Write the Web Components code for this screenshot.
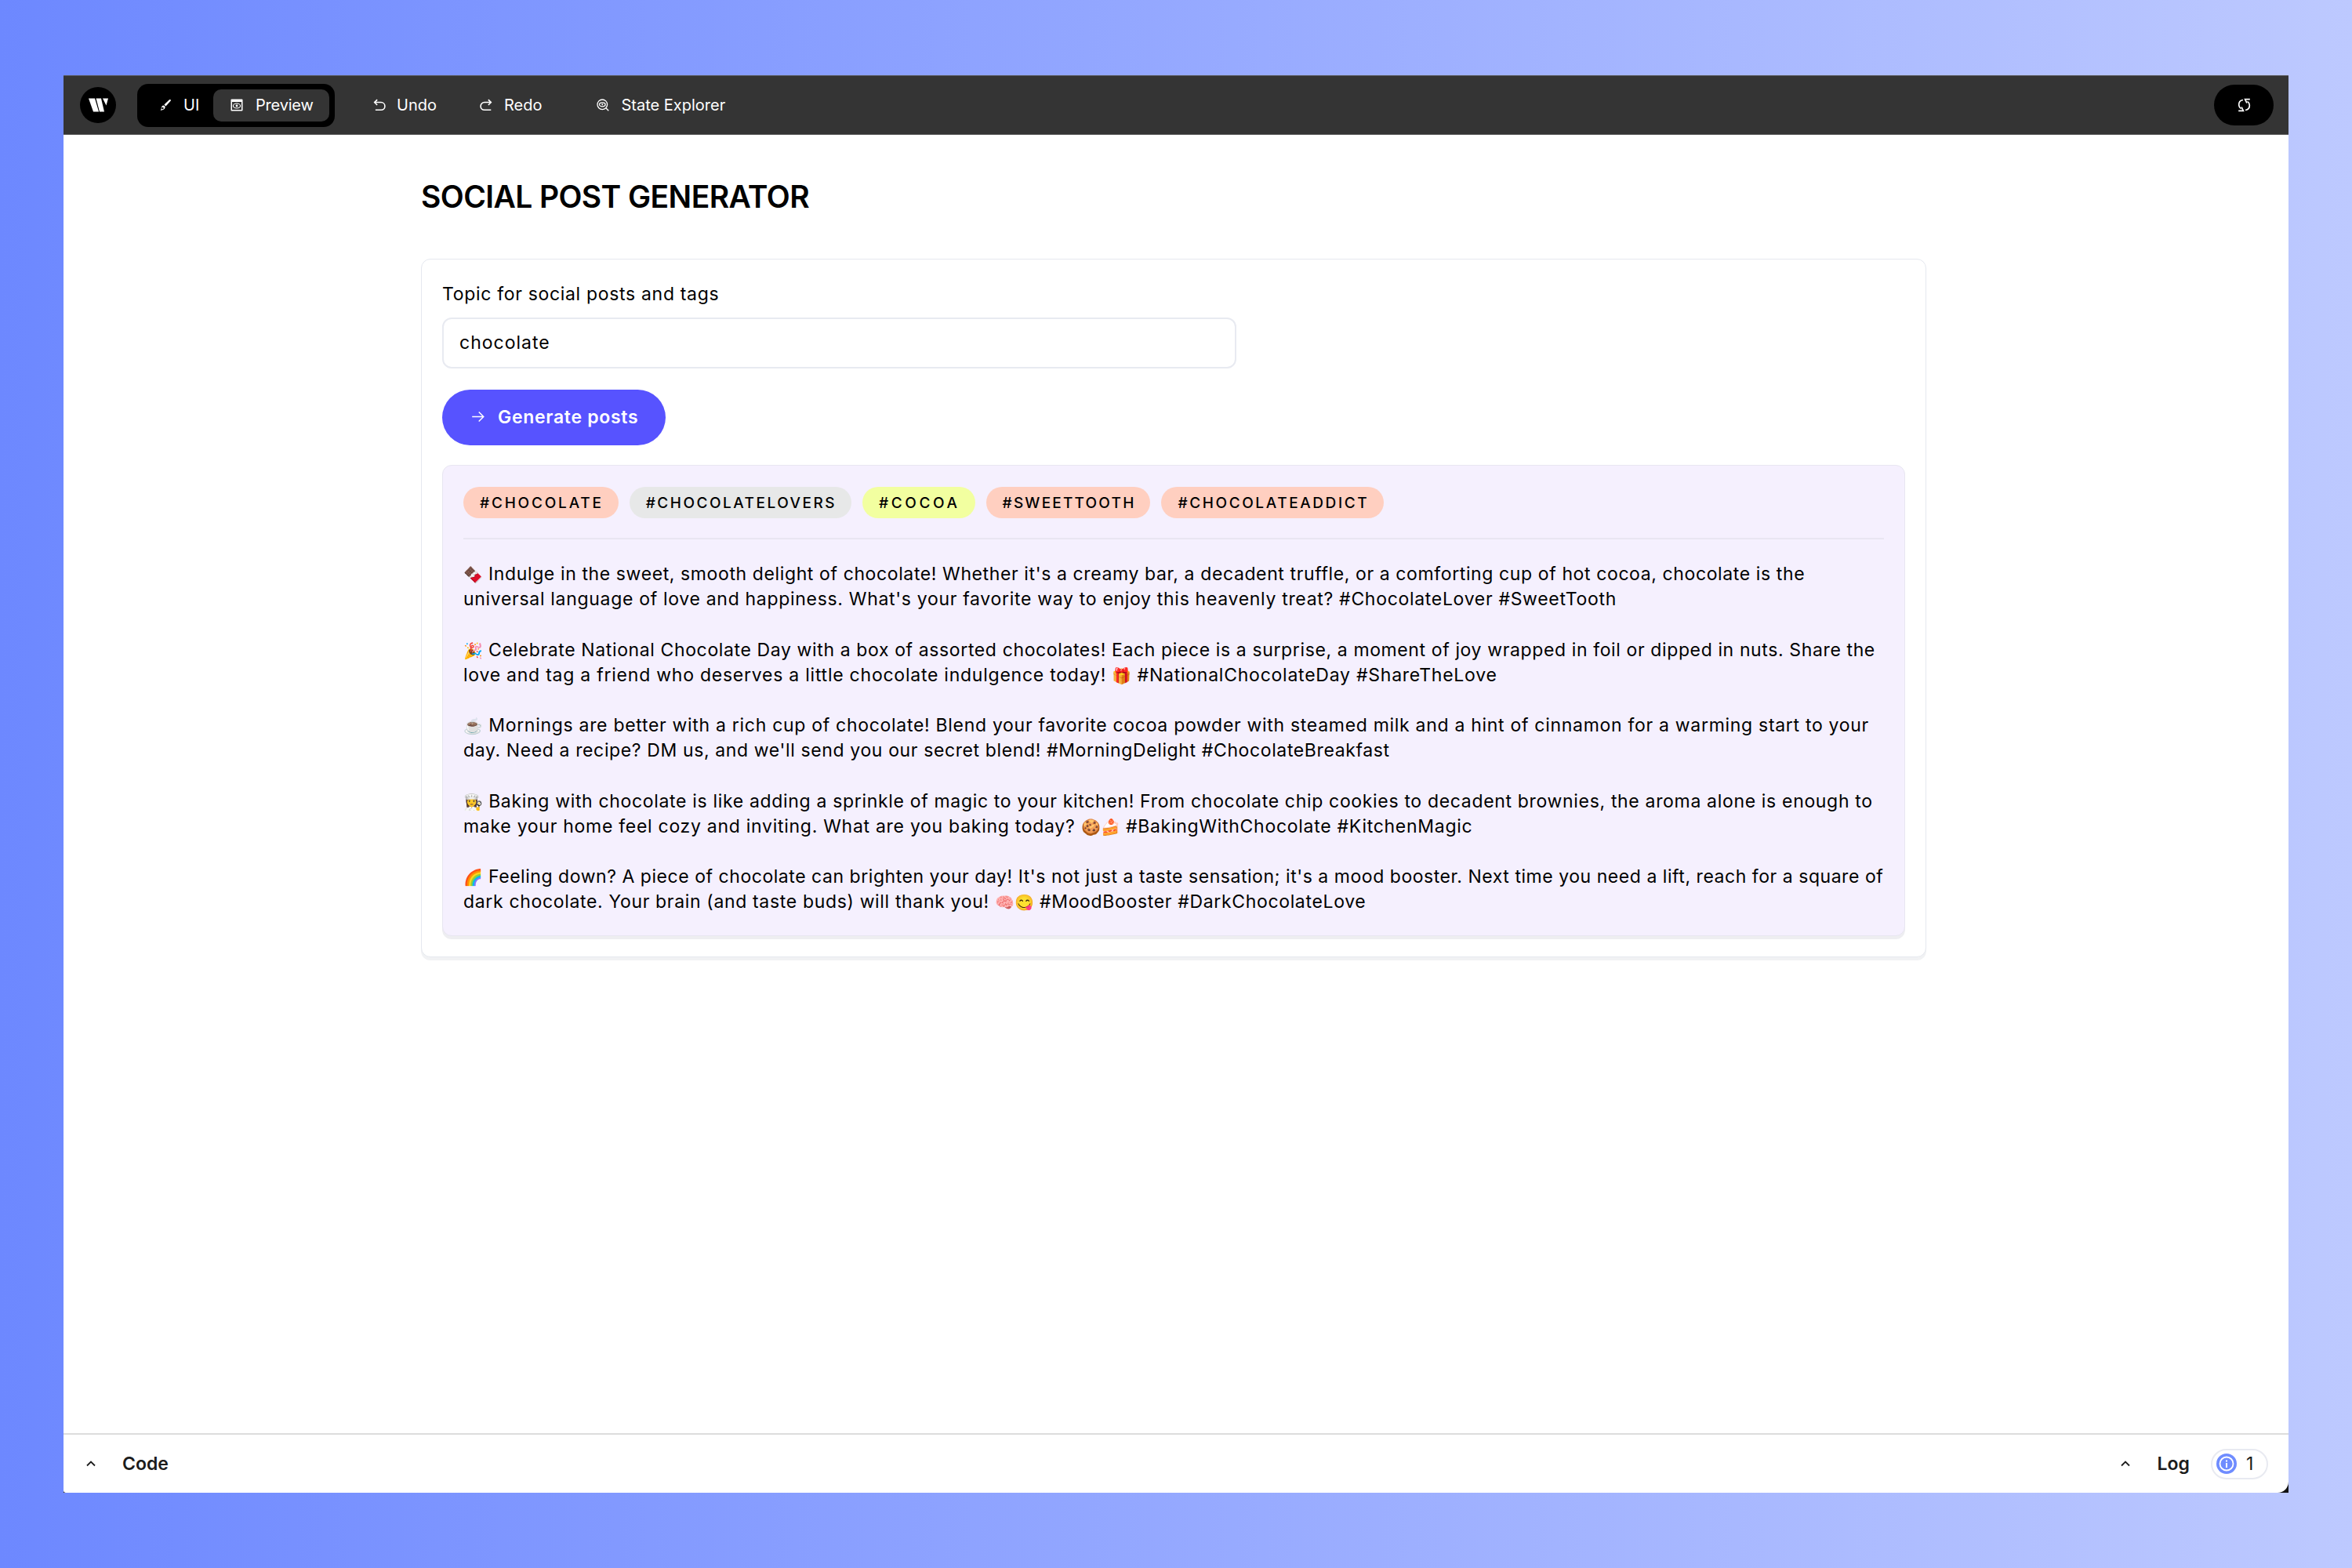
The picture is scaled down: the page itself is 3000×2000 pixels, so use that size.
<!DOCTYPE html>
<html lang="en">
<head>
<meta charset="utf-8">
<title>Social Post Generator</title>
<style>
	html, body { margin: 0; padding: 0; }
	body {
		width: 3000px;
		height: 2000px;
		box-sizing: border-box;
		padding: 96px 81px;
		background: linear-gradient(90deg, #6d88ff 0%, #bdc9ff 100%);
		font-family: Inter, "Noto Sans", sans-serif;
		color: #000;
	}
</style>
</head>
<body>
<app-window>
	<top-bar slot="top">
		<tool-group>
			<tool-button icon="brush">UI</tool-button>
			<tool-button icon="preview" active>Preview</tool-button>
		</tool-group>
		<tool-button icon="undo" gap="14" style="margin-left:49px">Undo</tool-button>
		<tool-button icon="redo" gap="15" style="margin-left:55px">Redo</tool-button>
		<tool-button icon="explore" gap="15" style="margin-left:70px">State Explorer</tool-button>
	</top-bar>

	<post-generator title-text="SOCIAL POST GENERATOR">
		<topic-input label="Topic for social posts and tags" value="chocolate"></topic-input>
		<generate-button>Generate posts</generate-button>
		<result-panel>
			<tag-chip slot="tags" color="#ffcfc0" spacing="2.8">#CHOCOLATE</tag-chip>
			<tag-chip slot="tags" color="#e7e8e8" spacing="2.5">#CHOCOLATELOVERS</tag-chip>
			<tag-chip slot="tags" color="#f2ffa0" spacing="3.6">#COCOA</tag-chip>
			<tag-chip slot="tags" color="#ffcfc0" spacing="2.2">#SWEETTOOTH</tag-chip>
			<tag-chip slot="tags" color="#ffcfc0" spacing="2.6">#CHOCOLATEADDICT</tag-chip>
			<p>
				<post-line spacing=".61"><emoji-glyph>🍫</emoji-glyph> Indulge in the sweet, smooth delight of chocolate! Whether it's a creamy bar, a decadent truffle, or a comforting cup of hot cocoa, chocolate is the</post-line>
				<post-line spacing=".69">universal language of love and happiness. What's your favorite way to enjoy this heavenly treat? #ChocolateLover #SweetTooth</post-line>
			</p>
			<p>
				<post-line spacing=".62"><emoji-glyph>🎉</emoji-glyph> Celebrate National Chocolate Day with a box of assorted chocolates! Each piece is a surprise, a moment of joy wrapped in foil or dipped in nuts. Share the</post-line>
				<post-line spacing=".76">love and tag a friend who deserves a little chocolate indulgence today! <emoji-glyph>🎁</emoji-glyph> #NationalChocolateDay #ShareTheLove</post-line>
			</p>
			<p>
				<post-line spacing=".70"><emoji-glyph>☕</emoji-glyph> Mornings are better with a rich cup of chocolate! Blend your favorite cocoa powder with steamed milk and a hint of cinnamon for a warming start to your</post-line>
				<post-line spacing=".62">day. Need a recipe? DM us, and we'll send you our secret blend! #MorningDelight #ChocolateBreakfast</post-line>
			</p>
			<p>
				<post-line spacing=".67"><emoji-glyph>👩‍🍳</emoji-glyph> Baking with chocolate is like adding a sprinkle of magic to your kitchen! From chocolate chip cookies to decadent brownies, the aroma alone is enough to</post-line>
				<post-line spacing=".72">make your home feel cozy and inviting. What are you baking today? <emoji-glyph>🍪🍰</emoji-glyph> #BakingWithChocolate #KitchenMagic</post-line>
			</p>
			<p>
				<post-line spacing=".54"><emoji-glyph>🌈</emoji-glyph> Feeling down? A piece of chocolate can brighten your day! It's not just a taste sensation; it's a mood booster. Next time you need a lift, reach for a square of</post-line>
				<post-line spacing=".66">dark chocolate. Your brain (and taste buds) will thank you! <emoji-glyph>🧠😋</emoji-glyph> #MoodBooster #DarkChocolateLove</post-line>
			</p>
		</result-panel>
	</post-generator>

	<bottom-bar slot="bottom"></bottom-bar>
</app-window>

<script>
(function(){
// Start of enclosed scope

// Same trick as lit-html, only here so editors treat the strings as markup
function html(strArr, ...args){
	let str = '';
	for(let i=0; i<strArr.length; str+=(args[i++] ?? '')) str+=strArr[i];
	return str;
}

const ICONS = {
	brush: `<svg viewBox="0 0 16 16" fill="#fff"><path d="M14.6 1.2c.5.4.4 1 0 1.500L8.500 9.400 6.400 7.500 12.900 1.300c.5-.4 1.200-.5 1.700-.1z"/><path d="M5.300 8.600c1.300 0 2.500 1.200 2.300 2.500-.3 2.200-2.600 3.900-6.100 3.600 1.500-1 1-2.300 1.500-3.800.3-1.200 1.200-2.300 2.300-2.300z"/><circle cx="4.400" cy="12" r="1.200" fill="#000"/></svg>`,
	preview: `<svg viewBox="0 0 16 16"><rect x=".5" y=".5" width="15" height="15" rx="1" fill="#fff"/><rect x="2" y="4" width="12" height="10" fill="#333"/><ellipse cx="8" cy="9" rx="4.600" ry="3" fill="none" stroke="#fff" stroke-width="1.100"/><circle cx="8" cy="9" r="1.400" fill="#fff"/></svg>`,
	undo: `<svg viewBox="0 0 14 14" fill="none" stroke="#fff" stroke-width="1.400"><path d="M4.500 1 1.500 4l3 3"/><path d="M1.500 4h7.300a3.700 3.700 0 0 1 0 8.500H2.500"/></svg>`,
	redo: `<svg viewBox="0 0 14 14" fill="none" stroke="#fff" stroke-width="1.400"><path d="M9.500 1l3 3-3 3"/><path d="M12.500 4H5.200a3.700 3.700 0 0 0 0 8.500h7.300"/></svg>`,
	explore: `<svg viewBox="0 0 16 16" fill="none" stroke="#fff" stroke-width="1.300"><circle cx="7.300" cy="7.300" r="6.300"/><path d="M12 12l3.300 3.300"/><ellipse cx="7.300" cy="7.300" rx="3.800" ry="2.500"/><circle cx="7.300" cy="7.300" r="1" fill="#fff" stroke="none"/></svg>`,
	arrow: `<svg viewBox="0 0 14 14" fill="none" stroke="#fff" stroke-width="1.200"><path d="M1 7h12M8 2l5 5-5 5"/></svg>`,
	chevron: `<svg viewBox="0 0 12 8" fill="none" stroke="#1c1c1c" stroke-width="1.800"><path d="M1 6.500 6 1.500l5 5"/></svg>`,
};

class AppWindow extends HTMLElement {
	constructor(){
		super();
		this.attachShadow({mode: 'open'});
		this.shadowRoot.innerHTML = html`<style>
			:host { display: block; height: 1808px; background: #111; }
			.sheet {
				height: 100%;
				display: flex;
				flex-direction: column;
				background: #fff;
				border-radius: 0 0 14px 3px;
				overflow: hidden;
			}
			main { flex: 1; min-height: 0; }
		</style>
		<div class="sheet">
			<slot name="top"></slot>
			<main><slot></slot></main>
			<slot name="bottom"></slot>
		</div>`;
	}
}

class TopBar extends HTMLElement {
	constructor(){
		super();
		this.attachShadow({mode: 'open'});
		this.shadowRoot.innerHTML = html`<style>
			:host {
				display: flex;
				align-items: center;
				height: 76px;
				box-sizing: border-box;
				padding: 0 19px 0 21px;
				background: #343434;
				border-top: 1px solid #555;
				border-bottom: 1px solid #555;
				flex: none;
			}
			.logo {
				width: 46px; height: 46px;
				border-radius: 50%;
				background: #000;
				display: flex; align-items: center; justify-content: center;
				margin-right: 27px;
				flex: none;
			}
			.logo svg { width: 25px; height: 18px; }
			.sync {
				margin-left: auto;
				width: 76px; height: 52px;
				border-radius: 26px;
				background: #000;
				display: flex; align-items: center; justify-content: center;
			}
			.sync svg { width: 17px; height: 18px; }
		</style>
		<div class="logo"><svg viewBox="0 0 25 18" fill="#fff"><path d="M0 .5h8L13 17.500H6z"/><path d="M9.500.5h6.500l4 17h-6z"/><path d="M18 .5h7l-2.500 9z"/></svg></div>
		<slot></slot>
		<div class="sync"><svg viewBox="0 0 17 18" fill="none" stroke="#fff" stroke-width="1.700"><path d="M7 2.500C3.500 3 1.500 5.500 1.700 9c.1 2 1.200 3.600 2.800 4.600"/><path d="M1.200 16.300h6.200l-2.300-4.800"/><path d="M10 15.500c3.500-.5 5.500-3 5.300-6.500-.1-2-1.200-3.600-2.800-4.600"/><path d="M15.800 1.700H9.600l2.300 4.800"/></svg></div>`;
	}
}

class ToolGroup extends HTMLElement {
	constructor(){
		super();
		this.attachShadow({mode: 'open'});
		this.shadowRoot.innerHTML = html`<style>
			:host {
				display: flex;
				align-items: center;
				width: 252px;
				height: 55px;
				box-sizing: border-box;
				padding: 0 7px 0 28px;
				justify-content: space-between;
				border-radius: 14px;
				background: #000;
			}
		</style><slot></slot>`;
	}
}

class ToolButton extends HTMLElement {
	constructor(){
		super();
		this.attachShadow({mode: 'open'});
		const active = this.hasAttribute('active');
		const gap = this.getAttribute('gap') || (active ? 16 : 15);
		this.shadowRoot.innerHTML = html`<style>
			:host {
				display: flex;
				align-items: center;
				gap: ${gap}px;
				color: #fff;
				font: 400 20px Inter, "Noto Sans", sans-serif;
				letter-spacing: ${active ? '-.2px' : '0'};
				white-space: nowrap;
				${active ? 'height: 41px; width: 148px; box-sizing: border-box; padding-left: 22px; background: #343434; border-radius: 10px;' : ''}
			}
			svg { width: 16px; height: 16px; flex: none; }
		</style>${ICONS[this.getAttribute('icon')]}<span><slot></slot></span>`;
	}
}

class PostGenerator extends HTMLElement {
	constructor(){
		super();
		this.attachShadow({mode: 'open'});
		this.shadowRoot.innerHTML = html`<style>
			:host { display: block; padding: 54px 0 0 456px; width: 1920px; }
			h1 {
				margin: 0 0 54px;
				font: 600 39px/50px Inter, "Noto Sans", sans-serif;
				letter-spacing: -.6px;
				color: #000;
				white-space: nowrap;
			}
			.card {
				display: flex;
				flex-direction: column;
				align-items: flex-start;
				padding: 27px 26px 26px;
				background: #fff;
				border: 1px solid #e5e8ef;
				border-radius: 12px;
				box-shadow: 0 4px 0 #f1f2f4;
			}
		</style>
		<h1>${this.getAttribute('title-text')}</h1>
		<div class="card"><slot></slot></div>`;
	}
}

class TopicInput extends HTMLElement {
	constructor(){
		super();
		this.attachShadow({mode: 'open'});
		this.shadowRoot.innerHTML = html`<style>
			:host { display: block; margin-bottom: 27px; }
			label { display: block; font-size: 23px; letter-spacing: .68px; line-height: 32px; padding-top: 1px; margin-bottom: 14px; white-space: nowrap; }
			input {
				display: block;
				width: 1013px;
				height: 65px;
				box-sizing: border-box;
				padding: 0 20px 2px;
				border: 2px solid #e8eaf1;
				border-radius: 12px;
				background: #fff;
				color: #000;
				font: 400 23px Inter, "Noto Sans", sans-serif;
				letter-spacing: 1px;
				outline: none;
			}
		</style>
		<label for="topic">${this.getAttribute('label')}</label>
		<input id="topic" type="text" value="${this.getAttribute('value')}">`;
	}
}

class GenerateButton extends HTMLElement {
	constructor(){
		super();
		this.attachShadow({mode: 'open'});
		this.shadowRoot.innerHTML = html`<style>
			:host {
				display: flex;
				align-items: center;
				gap: 17px;
				width: 285px;
				height: 71px;
				box-sizing: border-box;
				padding: 0 0 2px 37px;
				margin-bottom: 25px;
				border-radius: 36px;
				background: #5753ff;
				color: #fff;
				font: 600 23px Inter, "Noto Sans", sans-serif;
				letter-spacing: .7px;
				white-space: nowrap;
			}
			svg { width: 17px; height: 17px; flex: none; }
		</style>${ICONS.arrow}<slot></slot>`;
	}
}

class ResultPanel extends HTMLElement {
	constructor(){
		super();
		this.attachShadow({mode: 'open'});
		this.shadowRoot.innerHTML = html`<style>
			:host {
				display: block;
				align-self: stretch;
				box-sizing: border-box;
				padding: 27px 26px 26px;
				background: #f5f0fe;
				border: 1px solid #e8e6f1;
				border-radius: 12px;
				box-shadow: 0 4px 0 #eeeef1;
			}
			.tags {
				display: flex;
				gap: 14px;
				padding-bottom: 25px;
				margin-bottom: 28px;
				border-bottom: 2px solid #e9e6f2;
			}
			::slotted(p) {
				margin: 0 0 32.200px;
				font-size: 23px;
				line-height: 32.200px;
				white-space: nowrap;
			}
			::slotted(p:last-child) { margin-bottom: 0; }
		</style>
		<div class="tags"><slot name="tags"></slot></div>
		<slot></slot>`;
	}
}

// One rendered line of a post, tracking set per line
class PostLine extends HTMLElement {
	constructor(){
		super();
		this.attachShadow({mode: 'open'});
		this.shadowRoot.innerHTML = html`<style>
			:host { display: block; height: 32.200px; letter-spacing: ${this.getAttribute('spacing') || 0}px; }
		</style><slot></slot>`;
	}
}

class EmojiGlyph extends HTMLElement {
	constructor(){
		super();
		this.attachShadow({mode: 'open'});
		this.shadowRoot.innerHTML = html`<style>
			:host { display: inline; font-size: 20px; letter-spacing: 0; }
		</style><slot></slot>`;
	}
}

class TagChip extends HTMLElement {
	constructor(){
		super();
		this.attachShadow({mode: 'open'});
		this.shadowRoot.innerHTML = html`<style>
			:host {
				display: flex;
				align-items: center;
				height: 40px;
				padding: 0 19px 0 21px;
				border-radius: 20px;
				background: ${this.getAttribute('color')};
				font: 500 19px Inter, "Noto Sans", sans-serif;
				letter-spacing: ${this.getAttribute('spacing')}px;
				white-space: nowrap;
			}
		</style><slot></slot>`;
	}
}

class BottomBar extends HTMLElement {
	constructor(){
		super();
		this.attachShadow({mode: 'open'});
		this.shadowRoot.innerHTML = html`<style>
			:host {
				display: flex;
				align-items: center;
				flex: none;
				height: 76px;
				box-sizing: border-box;
				padding: 0 26px 0 29px;
				border-top: 2px solid #dcdcdc;
				color: #1c1c1c;
				font: 600 23px Inter, "Noto Sans", sans-serif;
			}
			.chev { width: 12px; height: 8px; flex: none; display: flex; }
			.code { margin-left: 34px; }
			.log { margin-left: auto; display: flex; align-items: center; }
			.log span { margin-left: 35px; }
			.pill {
				margin-left: 27px;
				width: 73px; height: 39px;
				box-sizing: border-box;
				padding-left: 5px;
				border: 2px solid #e8eaf1;
				border-radius: 20px;
				display: flex; align-items: center; gap: 12px;
				font-weight: 400;
			}
			.pill svg { width: 26px; height: 26px; flex: none; }
		</style>
		<div class="chev">${ICONS.chevron}</div>
		<div class="code">Code</div>
		<div class="log">
			<div class="chev">${ICONS.chevron}</div>
			<span>Log</span>
			<div class="pill">
				<svg viewBox="0 0 26 26"><circle cx="13" cy="13" r="13" fill="#6f8cff"/><circle cx="13" cy="13" r="8.500" fill="none" stroke="#fff" stroke-width="1.800"/><rect x="12" y="12" width="2" height="6" fill="#fff"/><rect x="12" y="8.500" width="2" height="2" fill="#fff"/></svg>
				1
			</div>
		</div>`;
	}
}

customElements.define('app-window', AppWindow);
customElements.define('top-bar', TopBar);
customElements.define('tool-group', ToolGroup);
customElements.define('tool-button', ToolButton);
customElements.define('post-generator', PostGenerator);
customElements.define('topic-input', TopicInput);
customElements.define('generate-button', GenerateButton);
customElements.define('result-panel', ResultPanel);
customElements.define('post-line', PostLine);
customElements.define('emoji-glyph', EmojiGlyph);
customElements.define('tag-chip', TagChip);
customElements.define('bottom-bar', BottomBar);

// End of enclosed scope
})();
</script>
</body>
</html>
